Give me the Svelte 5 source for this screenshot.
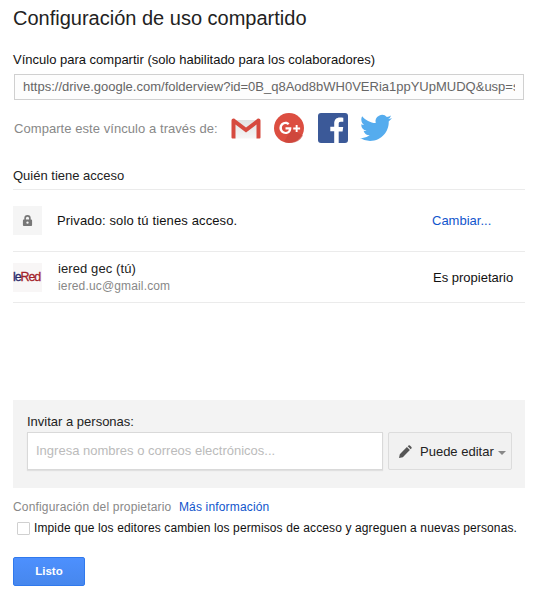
<script>
  const url = "https://drive.google.com/folderview?id=0B_q8Aod8bWH0VERia1ppYUpMUDQ&usp=sharing";
</script>

<div class="dialog">
  <h1>Configuración de uso compartido</h1>

  <div class="label">Vínculo para compartir (solo habilitado para los colaboradores)</div>
  <div class="url"><span>{url}</span></div>

  <div class="share">
    <span class="share-text">Comparte este vínculo a través de:</span>
    <svg class="ic gmail" viewBox="0 0 30 21" width="30" height="21">
      <defs>
        <linearGradient id="env" x1="0" y1="0" x2="0" y2="1">
          <stop offset="0" stop-color="#e2e2e2"/>
          <stop offset="1" stop-color="#f6f6f6"/>
        </linearGradient>
      </defs>
      <rect x="4" y="2" width="22" height="18.500" fill="url(#env)"/>
      <path d="M.5 2.500C.5.800 2.500 0 3.800 1L15 9.500 26.200 1c1.300-1 3.300-.2 3.300 1.500v17a1 1 0 0 1-1 1h-3V6.500L15 14.500 4.500 6.500v14h-3a1 1 0 0 1-1-1z" fill="#d64a3f"/>
    </svg>
    <svg class="ic gplus" viewBox="0 0 30 30" width="30" height="30">
      <circle cx="15" cy="15" r="15" fill="#dc4e41"/>
      <path d="M17 16l5 3 7 3.500A15 15 0 0 1 15 30a15 15 0 0 1-5-.9z" fill="#c9453a" opacity="0.7"/>
      <path d="M11.500 8.800c1.700 0 3 .6 4 1.600l-1.700 1.700c-.6-.6-1.400-1-2.300-1-2 0-3.600 1.700-3.600 3.900s1.600 3.900 3.600 3.900c2.100 0 3.100-1.300 3.300-2.500h-3.300v-2.200h5.800c.4 3.900-2 6.900-5.800 6.900a6.150 6.150 0 1 1 0-12.300z" fill="#fff"/>
      <path d="M21.700 12h1.900v2.500h2.500v1.900h-2.500v2.500h-1.900v-2.500h-2.500v-1.900h2.500z" fill="#fff"/>
    </svg>
    <svg class="ic fb" viewBox="0 0 30 30" width="30" height="30">
      <rect width="30" height="30" rx="3" fill="#3b5998"/>
      <path d="M20.700 30V18.400h3.900l.6-4.500h-4.500V11c0-1.300.4-2.200 2.200-2.200h2.400v-4c-.4-.1-1.800-.2-3.400-.2-3.400 0-5.700 2.100-5.700 5.900v3.300h-3.900v4.500h3.900V30z" fill="#fff"/>
    </svg>
    <svg class="ic tw" viewBox="0 0 24 24" width="32" height="32">
      <path d="M23.950 4.570a10 10 0 0 1-2.820.77 4.960 4.960 0 0 0 2.160-2.720c-.95.550-2 .96-3.130 1.190a4.920 4.920 0 0 0-8.380 4.480C7.690 8.100 4.070 6.130 1.640 3.160a4.820 4.820 0 0 0-.67 2.470c0 1.710.87 3.210 2.190 4.100a4.900 4.900 0 0 1-2.230-.62v.06a4.920 4.920 0 0 0 3.950 4.830 4.940 4.940 0 0 1-2.210.08 4.930 4.930 0 0 0 4.600 3.420A9.870 9.870 0 0 1 0 19.540a13.940 13.940 0 0 0 7.550 2.210c9.050 0 14-7.500 14-13.980 0-.21 0-.42-.02-.63a9.940 9.940 0 0 0 2.460-2.550z" fill="#55acee"/>
    </svg>
  </div>

  <div class="section">Quién tiene acceso</div>

  <div class="row first">
    <div class="tile">
      <svg viewBox="0 0 12 14" width="11" height="13">
        <path d="M6 1a3.500 3.500 0 0 0-3.500 3.500V6H2a1 1 0 0 0-1 1v5a1 1 0 0 0 1 1h8a1 1 0 0 0 1-1V7a1 1 0 0 0-1-1h-.5V4.500A3.500 3.500 0 0 0 6 1zm0 1.800a1.700 1.700 0 0 1 1.700 1.700V6H4.300V4.500A1.700 1.700 0 0 1 6 2.800zM6 8a1.300 1.300 0 1 1 0 2.600A1.300 1.300 0 0 1 6 8z" fill="#777" fill-rule="evenodd"/>
      </svg>
    </div>
    <div class="grow dark">Privado: solo tú tienes acceso.</div>
    <a class="change">Cambiar...</a>
  </div>

  <div class="row second">
    <div class="tile logo"><span class="e">le</span><span class="red">Red</span></div>
    <div class="grow person">
      <div class="name">iered gec (tú)</div>
      <div class="mail">iered.uc@gmail.com</div>
    </div>
    <div class="owner">Es propietario</div>
  </div>

  <div class="invite">
    <div class="invite-label">Invitar a personas:</div>
    <div class="invite-row">
      <div class="people">Ingresa nombres o correos electrónicos...</div>
      <div class="perm">
        <svg viewBox="0 0 14 14" width="14" height="14">
          <path d="M0 14l.8-3.800L7.900 3.100l3 3L3.800 13.200zM8.700 2.300l.8-.7a1 1 0 0 1 1.400 0l1.500 1.500a1 1 0 0 1 0 1.400l-.7.800z" fill="#555"/>
        </svg>
        <span>Puede editar</span>
        <i class="caret"></i>
      </div>
    </div>
  </div>

  <div class="owner-settings">
    <span>Configuración del propietario</span>
    <a>Más información</a>
  </div>
  <div class="check">
    <span class="box"></span>
    <span>Impide que los editores cambien los permisos de acceso y agreguen a nuevas personas.</span>
  </div>

  <button class="done">Listo</button>
</div>

<style>
  :global(body) {
    margin: 0;
    background: #fff;
  }
  .dialog {
    width: 512px;
    padding: 0 0 0 13px;
    font-family: "Liberation Sans", Arial, sans-serif;
    font-size: 13px;
    color: #222;
  }
  h1 {
    margin: 0;
    padding-top: 5px;
    font-size: 20px;
    font-weight: 400;
    line-height: 27px;
    height: 27px;
    color: #222;
  }
  .label {
    margin-top: 20px;
    line-height: 16px;
    color: #111;
  }
  .url {
    box-sizing: border-box;
    margin: 6px 0 0 1px;
    width: 510px;
    height: 26px;
    border: 1px solid #d0d0d0;
    background: #fdfdfd;
    padding: 0 8px;
    line-height: 24px;
    color: #666;
    overflow: hidden;
    white-space: nowrap;
  }
  .url span {
    display: inline-block;
    width: 492px;
    overflow: hidden;
  }
  .share {
    display: flex;
    align-items: center;
    height: 30px;
    margin-top: 13px;
    padding-left: 1px;
  }
  .share-text {
    color: #888;
    width: 217px;
    letter-spacing: 0.06px;
  }
  .ic {
    flex: none;
  }
  .gplus {
    margin-left: 13px;
  }
  .fb {
    margin-left: 14px;
  }
  .tw {
    margin-left: 12px;
  }
  .section {
    margin-top: 25px;
    line-height: 16px;
    color: #222;
  }
  .row {
    display: flex;
    align-items: center;
    border-top: 1px solid #ebebeb;
  }
  .row.first {
    margin-top: 5px;
    height: 61px;
  }
  .row.second {
    height: 50px;
    border-bottom: 1px solid #ebebeb;
  }
  .tile {
    flex: none;
    width: 29px;
    height: 29px;
    background: #f5f5f5;
    display: flex;
    align-items: center;
    justify-content: center;
    margin-right: 15px;
  }
  .logo {
    background: #f8f6f6;
    font-size: 12.500px;
    letter-spacing: -1.1px;
    justify-content: flex-start;
    overflow: hidden;
    -webkit-text-stroke: 0.3px currentColor;
  }
  .e {
    color: #2a2a6e;
  }
  .red {
    color: #a3222a;
  }
  .grow {
    flex: 1;
  }
  .dark {
    color: #111;
    letter-spacing: 0.13px;
  }
  .person {
    padding: 1px 0 0 1px;
  }
  .name {
    line-height: 16px;
    color: #222;
    letter-spacing: 0.1px;
  }
  .mail {
    line-height: 16px;
    margin-top: 1px;
    font-size: 12px;
    letter-spacing: 0.15px;
    color: #888;
  }
  .change {
    color: #15c;
    width: 93px;
  }
  .owner {
    color: #111;
    width: 92px;
  }
  .invite {
    box-sizing: border-box;
    margin-top: 97px;
    height: 88px;
    background: #f3f3f3;
    padding: 14px 13px 0 14px;
  }
  .invite-label {
    line-height: 16px;
    color: #222;
  }
  .invite-row {
    display: flex;
    margin-top: 2px;
  }
  .people {
    box-sizing: border-box;
    width: 356px;
    height: 38px;
    background: #fff;
    border: 1px solid #d9d9d9;
    padding-left: 8px;
    line-height: 36px;
    color: #bbb;
    font-size: 13px;
    box-shadow: 0 1px 1px rgba(0, 0, 0, 0.08);
  }
  .perm {
    box-sizing: border-box;
    margin-left: 5px;
    width: 124px;
    height: 38px;
    border: 1px solid #dcdcdc;
    border-radius: 2px;
    background: #f1f1f1;
    display: flex;
    align-items: center;
    padding-left: 10px;
    color: #222;
  }
  .perm span {
    margin-left: 7px;
  }
  .caret {
    margin: 3px 0 0 4px;
    border: 4px solid transparent;
    border-top-color: #888;
    border-bottom: 0;
  }
  .owner-settings {
    margin-top: 11px;
    line-height: 16px;
    font-size: 12px;
    letter-spacing: 0.17px;
    color: #888;
  }
  .owner-settings a {
    margin-left: 4px;
    color: #15c;
  }
  .check {
    display: flex;
    align-items: center;
    margin: 5px 0 0 4px;
    height: 16px;
    font-size: 12px;
    letter-spacing: 0.12px;
    color: #111;
    white-space: nowrap;
  }
  .box {
    box-sizing: border-box;
    flex: none;
    width: 13px;
    height: 13px;
    border: 1px solid #d0d0d0;
    border-radius: 1px;
    background: #fff;
    margin-right: 4px;
  }
  .done {
    display: block;
    box-sizing: border-box;
    margin-top: 21px;
    width: 72px;
    height: 29px;
    border: 1px solid #3079ed;
    border-radius: 2px;
    background: linear-gradient(#4d90fe, #4787ed);
    color: #fff;
    font-family: inherit;
    font-size: 11.500px;
    font-weight: 700;
    padding: 0 0 2px;
  }
</style>
